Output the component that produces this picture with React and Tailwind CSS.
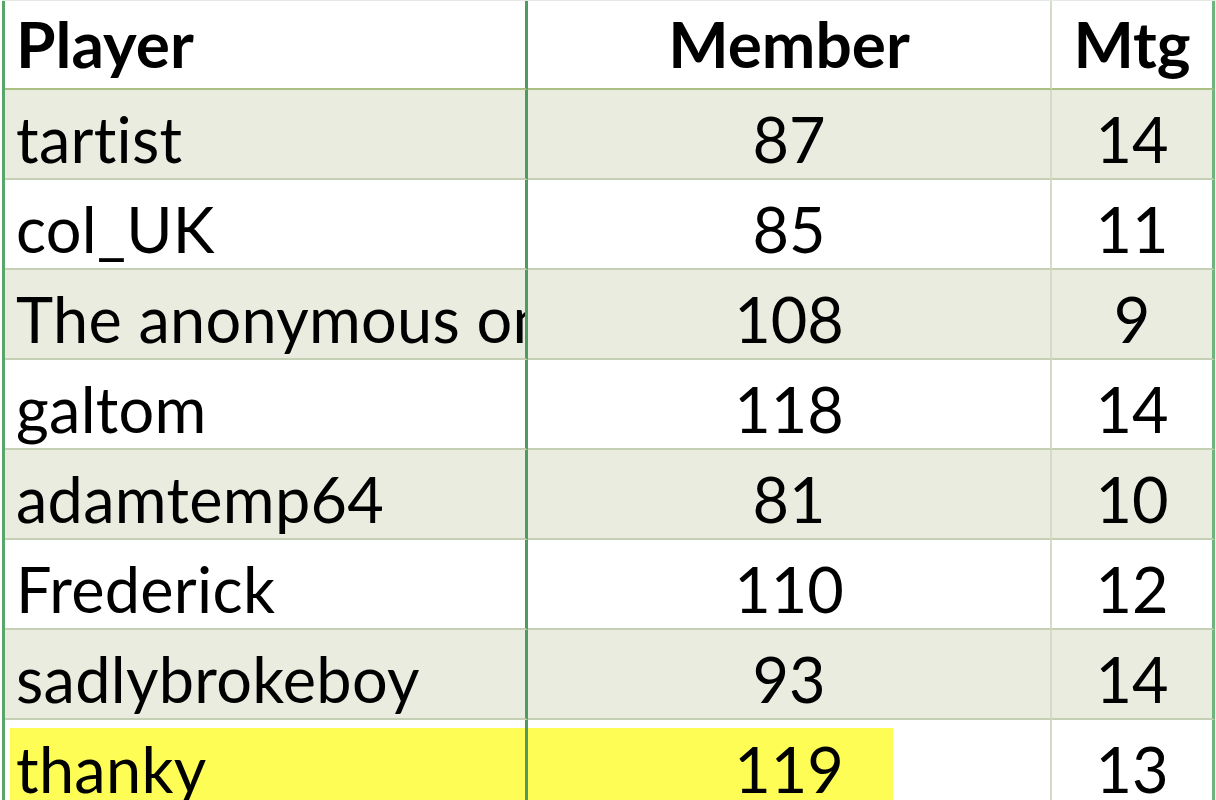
import React from 'react';

const rows = [
  { player: 'tartist', member: '87', mtg: '14' },
  { player: 'col_UK', member: '85', mtg: '11' },
  { player: 'The anonymous one', member: '108', mtg: '9' },
  { player: 'galtom', member: '118', mtg: '14' },
  { player: 'adamtemp64', member: '81', mtg: '10' },
  { player: 'Frederick', member: '110', mtg: '12' },
  { player: 'sadlybrokeboy', member: '93', mtg: '14' },
  { player: 'thanky', member: '119', mtg: '13', highlight: true },
];

const font = { fontFamily: 'Lato, "Liberation Sans", sans-serif' };

export default function App() {
  return (
    <div className="w-[1216px] h-[800px] overflow-hidden bg-white pl-[2px] [font-variant-ligatures:none]" style={font}>
      <div className="border-t border-[#e6e8e3] h-full">
        <div className="grid grid-cols-[523px_524px_163px] border-l-[3px] border-[#5aa66a] h-full">
          {/* Header */}
          <div className="h-[89px] flex items-end pl-[11px] pb-[12px] border-b-2 border-[#a9bf83] border-r-[3px] border-r-[#4f9a5e]">
            <span className="text-[64px] leading-none font-bold text-black">Player</span>
          </div>
          <div className="h-[89px] flex items-end justify-center pb-[12px] border-b-2 border-[#a9bf83] border-r-2 border-r-[#d3dcc6]">
            <span className="text-[64px] leading-none font-bold text-black">Member</span>
          </div>
          <div className="h-[89px] flex items-end justify-center pb-[12px] border-b-2 border-[#a9bf83] border-r-[3px] border-r-[#6db57c]">
            <span className="text-[64px] leading-none font-bold text-black">Mtg</span>
          </div>

          {rows.map((r, i) => {
            const bg = i % 2 === 0 ? 'bg-[#eaecdf]' : 'bg-white';
            return (
              <React.Fragment key={r.player}>
                <div className={`relative h-[90px] flex items-end pl-[11px] pb-[8px] overflow-hidden whitespace-nowrap border-b-2 border-[#c5cfb4] border-r-[3px] border-r-[#4f9a5e] ${bg}`}>
                  {r.highlight && <span className="absolute left-[5px] right-0 top-[8px] bottom-0 bg-[#fdfd55]" />}
                  <span className="relative text-[63px] leading-none text-black tracking-[0.3px]">{r.player}</span>
                </div>
                <div className={`relative h-[90px] flex items-end justify-center pb-[8px] border-b-2 border-[#c5cfb4] border-r-2 border-r-[#d3dcc6] ${bg}`}>
                  {r.highlight && <span className="absolute left-0 top-[8px] bottom-0 w-[365px] bg-[#fdfd55]" />}
                  <span className="relative text-[63px] leading-none text-black">{r.member}</span>
                </div>
                <div className={`h-[90px] flex items-end justify-center pb-[8px] border-b-2 border-[#c5cfb4] border-r-[3px] border-r-[#6db57c] ${bg}`}>
                  <span className="text-[63px] leading-none text-black">{r.mtg}</span>
                </div>
              </React.Fragment>
            );
          })}
        </div>
      </div>
    </div>
  );
}
